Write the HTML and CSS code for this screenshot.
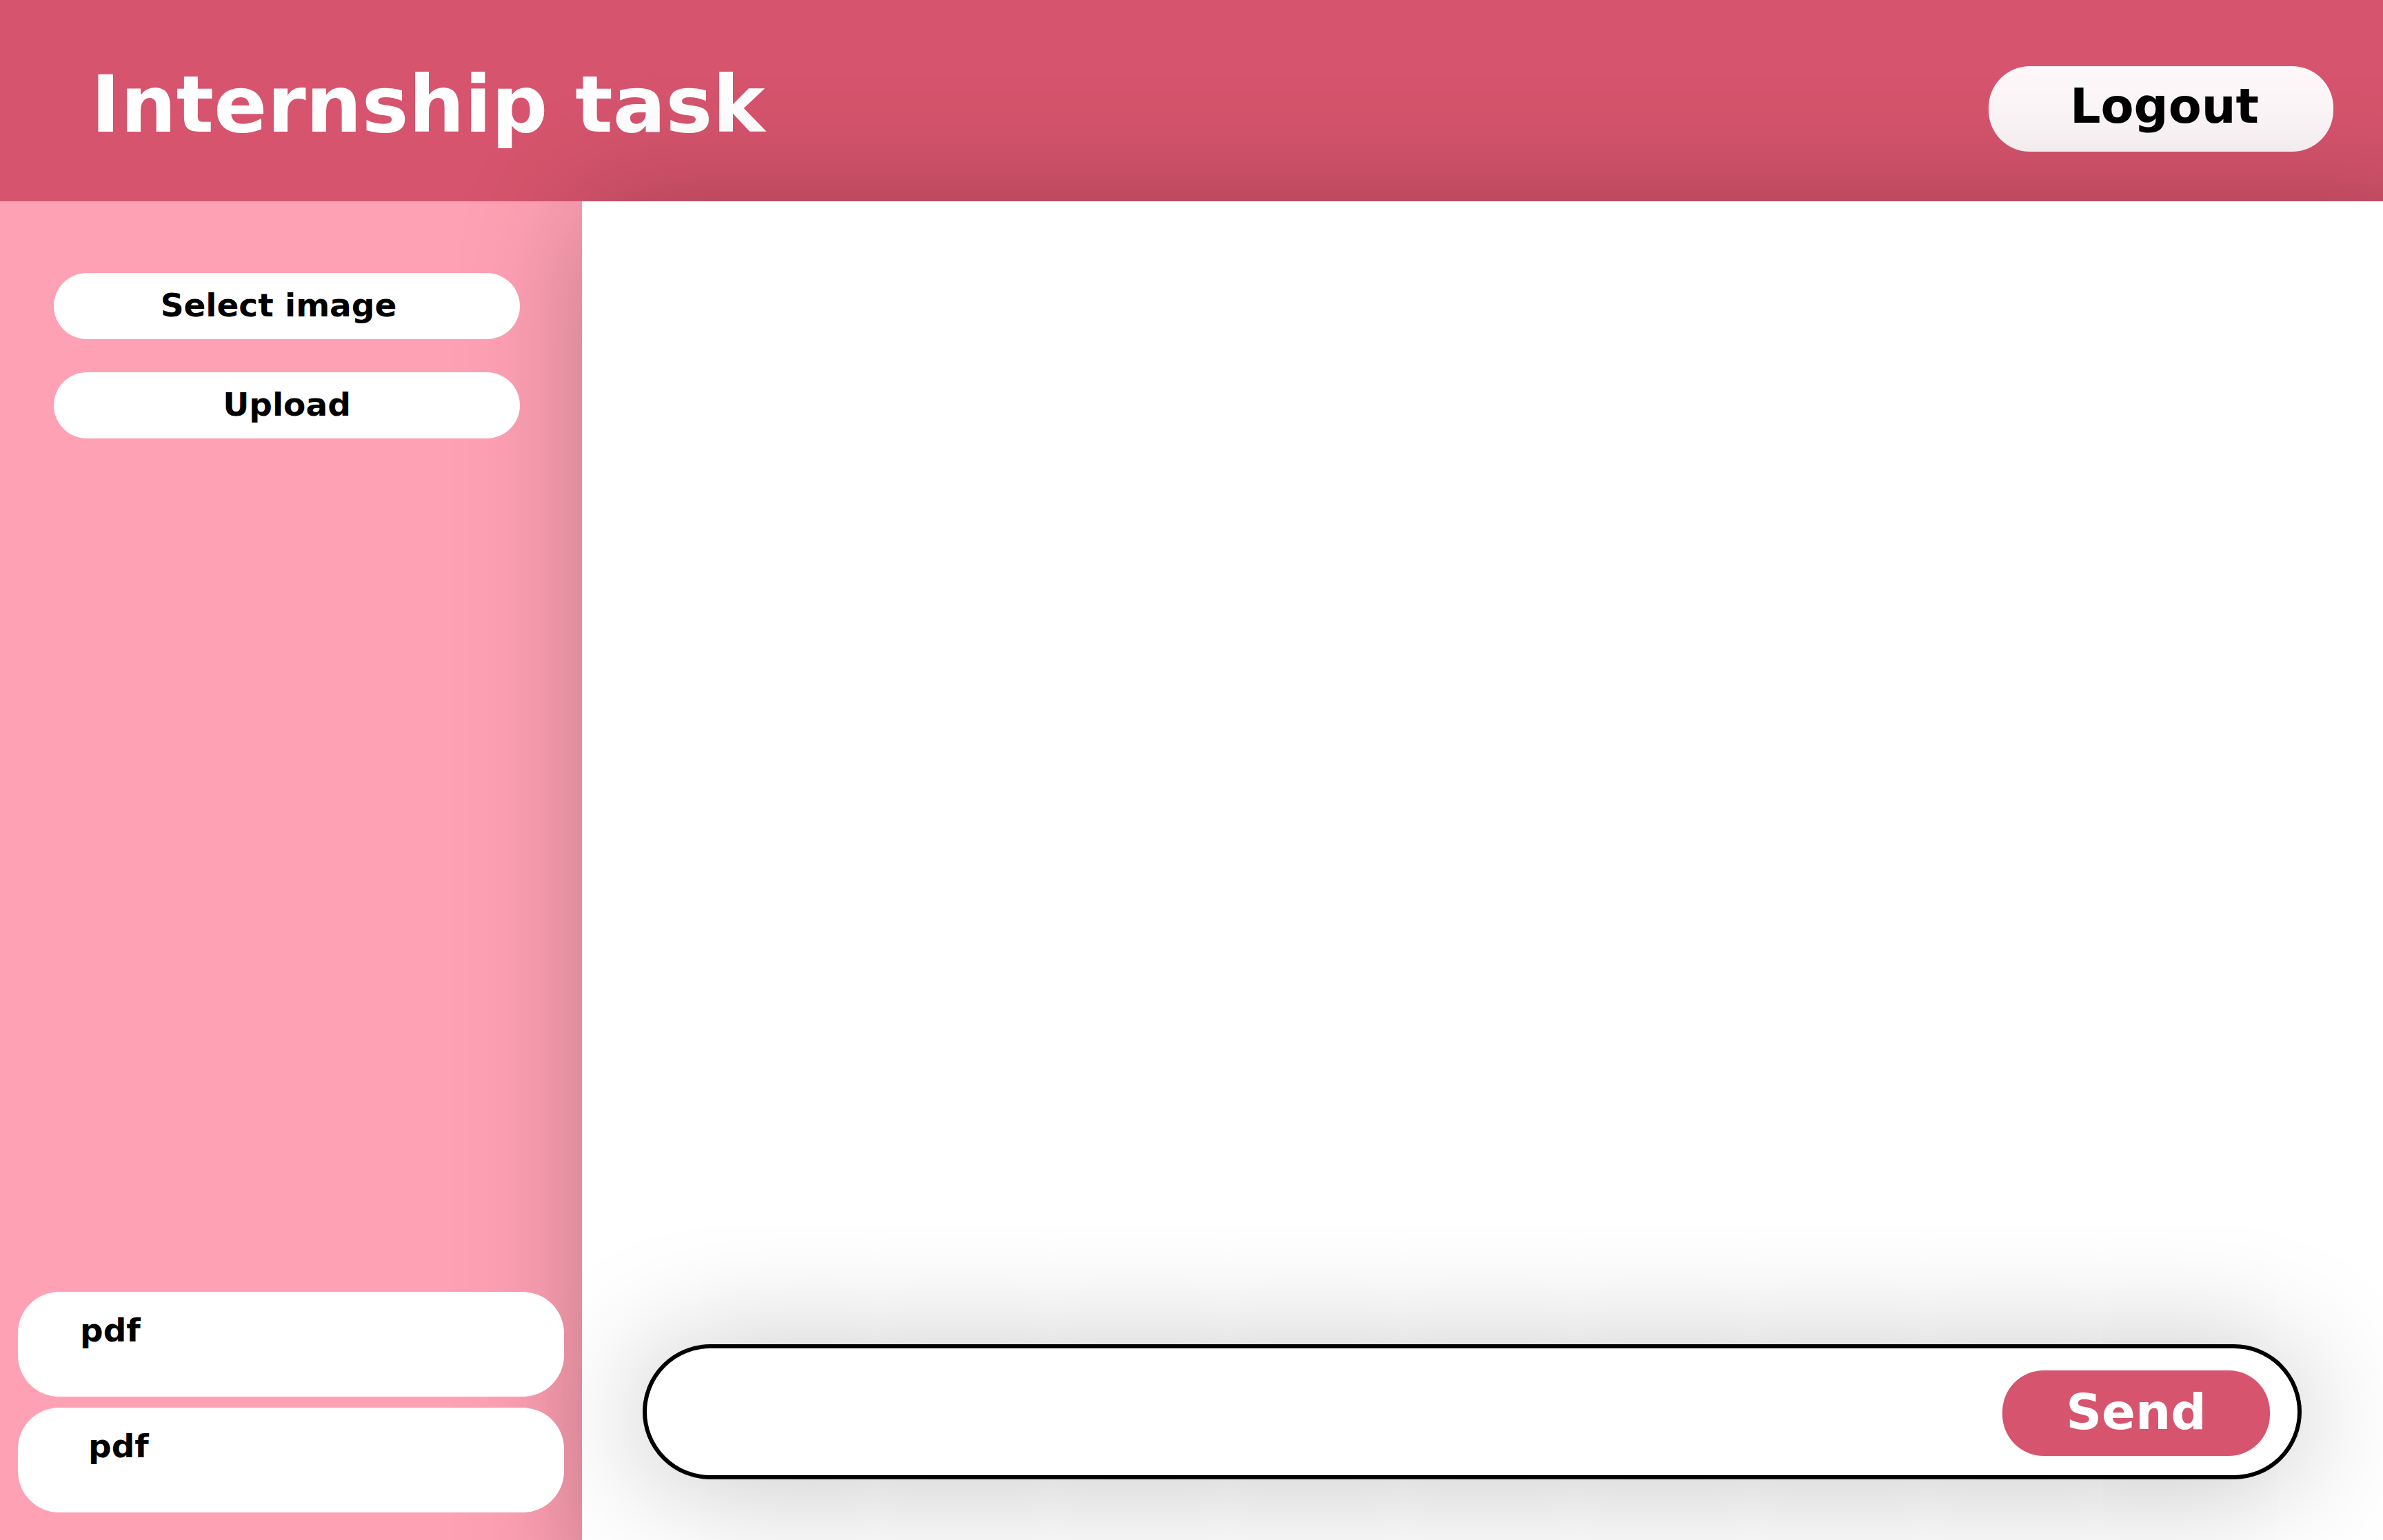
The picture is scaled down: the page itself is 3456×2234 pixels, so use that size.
FILE: index.html
```html
<!DOCTYPE html>
<html lang="en">
<head>
  <meta charset="utf-8">
  <meta name="viewport" content="width=device-width, initial-scale=1">
  <title>Internship task</title>
  <link rel="stylesheet" href="styles.css">
</head>
<body class="page">
  <header class="topbar">
    <h1 class="title">Internship task</h1>
    <button class="logout" type="button">Logout</button>
  </header>
  <div class="body">
    <aside class="sidebar">
      <div class="actions">
        <button class="action action-select" type="button">Select image</button>
        <button class="action" type="button">Upload</button>
      </div>
      <ul class="files">
        <li class="file">pdf</li>
        <li class="file file-nested">pdf</li>
      </ul>
    </aside>
    <main class="chat">
      <form class="composer">
        <input class="message" type="text" aria-label="Message">
        <button class="send" type="submit">Send</button>
      </form>
    </main>
  </div>
</body>
</html>
```
FILE: styles.css
```css
* {
  box-sizing: border-box;
}

.page {
  margin: 0;
  min-height: 100vh;
  display: flex;
  flex-direction: column;
  background: #ffa1b4;
  color: #000;
  font-family: "DejaVu Sans", Verdana, sans-serif;
  font-weight: 700;
}

button,
input {
  border: 0;
  color: inherit;
  font: inherit;
}

.topbar {
  display: flex;
  align-items: center;
  justify-content: space-between;
  height: 292px;
  padding: 0 72px 0 132px;
  background: #d6546d;
}

.title {
  margin: 0;
  padding-top: 12px;
  color: #fff;
  font-size: 114px;
  line-height: 132px;
}

.logout {
  width: 500px;
  height: 124px;
  margin-top: 24px;
  padding: 0 0 8px 10px;
  border-radius: 60px;
  background: #fef7f9;
  font-size: 70px;
}

.body {
  flex: 1;
  display: flex;
}

.sidebar {
  position: relative;
  z-index: 2;
  flex: 0 0 844px;
  display: flex;
  flex-direction: column;
  justify-content: space-between;
  padding: 104px 26px 40px;
  font-size: 47px;
}

.actions {
  display: flex;
  flex-direction: column;
  gap: 48px;
  padding: 0 64px 0 52px;
}

.action {
  height: 96px;
  padding: 0 0 4px;
  border-radius: 48px;
  background: #fff;
}

.action-select {
  padding-right: 24px;
}

.files {
  display: flex;
  flex-direction: column;
  gap: 16px;
  margin: 0;
  padding: 0;
  list-style: none;
}

.file {
  height: 152px;
  padding: 24px 90px;
  border-radius: 60px;
  background: #fff;
  line-height: 64px;
}

.file-nested {
  padding-left: 102px;
}

/* the shadow falls on the header and the sidebar */
.chat {
  position: relative;
  z-index: 1;
  flex: 1;
  display: flex;
  align-items: flex-end;
  padding: 88px 118px 88px 88px;
  background: #fff;
  box-shadow: 50px 54px 170px 50px rgba(0, 0, 0, 0.24);
}

.composer {
  flex: 1;
  display: flex;
  align-items: center;
  height: 196px;
  padding: 4px 40px 0 60px;
  border: 6px solid #000;
  border-radius: 98px;
  background: #fff;
  box-shadow: 0 8px 180px rgba(0, 0, 0, 0.25);
  font-size: 72px;
}

.message {
  flex: 1;
  min-width: 0;
  height: 124px;
  padding: 0 24px;
  background: transparent;
  outline: none;
}

.send {
  width: 388px;
  height: 124px;
  padding: 0 0 4px;
  border-radius: 60px;
  background: #d6546d;
  color: #fff;
}
```
